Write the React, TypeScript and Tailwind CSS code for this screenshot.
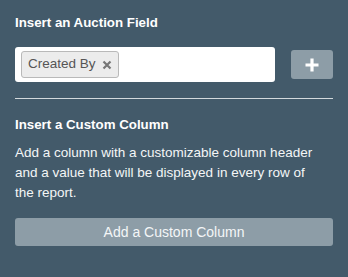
import React from "react";

export default function App() {
  return (
    <div
      className="w-[348px] h-[277px] bg-[#435a6a] px-[15px] pt-[15px] text-white"
      style={{ fontFamily: '"Liberation Sans", Arial, sans-serif' }}
    >
      <h2 className="text-[13.3px] font-bold leading-[15px]">Insert an Auction Field</h2>
      <div className="mt-[17px] flex items-start">
        <div className="w-[260px] h-[35px] bg-white rounded-[3px] flex items-center pl-[6px]">
          <div className="h-[27px] flex items-center gap-[6px] bg-[#ececec] border border-[#b9b9b9] rounded-[3px] pl-[6px] pr-[6px] text-[#555] text-[13.5px]">
            <span>Created By</span>
            <svg width="10" height="10" viewBox="0 0 10 10" className="mt-[1px]">
              <path d="M1.5 1.5L8.5 8.5M8.5 1.5L1.5 8.5" stroke="#777" strokeWidth="2.2" strokeLinecap="butt" />
            </svg>
          </div>
        </div>
        <button className="ml-[16px] mt-[3px] w-[42px] h-[29px] bg-[#8d9da7] rounded-[3px] flex items-center justify-center">
          <svg width="14" height="14" viewBox="0 0 14 14">
            <path d="M7 0.5V13.5M0.5 7H13.5" stroke="#fff" strokeWidth="3.2" />
          </svg>
        </button>
      </div>
      <div className="mt-[16px] h-px bg-[#d3d9dc]" />
      <h2 className="mt-[18px] text-[13.3px] font-bold leading-[15px]">Insert a Custom Column</h2>
      <p className="mt-[11px] w-[305px] text-[13.5px] leading-[20px] text-[#f4f6f7]">
        Add a column with a customizable column header and a value that will be displayed in every row of the report.
      </p>
      <button className="mt-[15px] w-full h-[28px] bg-[#8d9da7] rounded-[3px] text-[14px] text-[#f4f6f7] flex items-center justify-center">
        Add a Custom Column
      </button>
    </div>
  );
}
